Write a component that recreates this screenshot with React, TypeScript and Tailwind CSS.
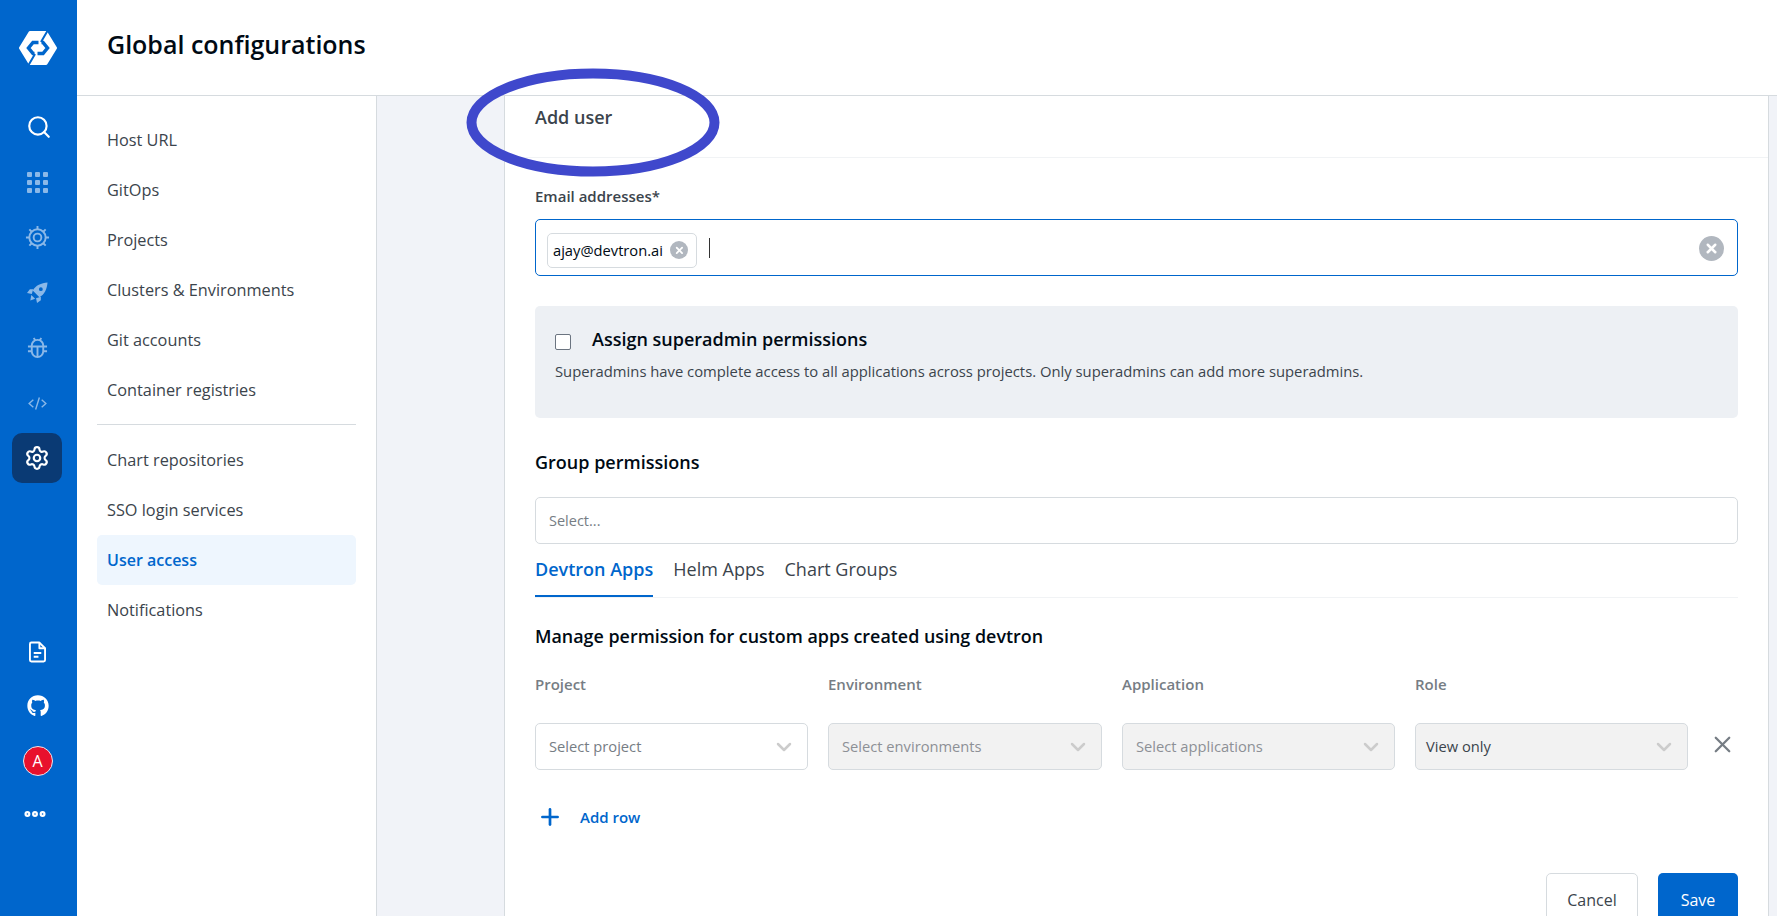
import { ChevronDown, Ellipsis, Plus, Search, Settings, X } from "lucide-react";
import { FaGithub } from "react-icons/fa";

const topItems = ["Host URL", "GitOps", "Projects", "Clusters & Environments", "Git accounts", "Container registries"];
const bottomItems = ["Chart repositories", "SSO login services", "User access", "Notifications"];

function Logo() {
  return (
    <svg width="38" height="34" viewBox="0 0 38 34">
      <polygon points="11,1.500 27,1.500 36.500,17 27,32.500 11,32.500 1.500,17" fill="white" stroke="white" strokeWidth="3" strokeLinejoin="round" />
      <path d="M29 -1L22 11M16 23L9 35" fill="none" stroke="#0066cc" strokeWidth="2" />
      <path d="M19.500 11.500H14L9.500 17L14 22.500H15.500M22.500 11.500H24L28.500 17L24 22.500H18.500" fill="none" stroke="#0066cc" strokeWidth="3.500" />
      <path d="M22 13.500L17.500 17H20.500L16 20.500" fill="none" stroke="white" strokeWidth="2" />
    </svg>
  );
}

function GridIcon() {
  return (
    <svg width="21" height="21" viewBox="0 0 21 21" fill="#8ab8e8">
      {[0, 8, 16].map((y) => [0, 8, 16].map((x) => <rect key={`${x}-${y}`} x={x} y={y} width="5" height="5" rx="1" />))}
    </svg>
  );
}

function HelmIcon() {
  return (
    <svg width="25" height="25" viewBox="0 0 26 26" fill="none" stroke="#8ab8e8" strokeWidth="2">
      <circle cx="13" cy="13" r="8.500" />
      <circle cx="13" cy="13" r="4" />
      <path d="M13 1v3.500M13 21.500V25M1 13h3.500M21.500 13H25M4.500 4.500l2.500 2.500M19 19l2.500 2.500M21.500 4.500L19 7M7 19l-2.500 2.500" />
    </svg>
  );
}

function RocketIcon() {
  return (
    <svg width="21" height="21" viewBox="0 0 22 22" fill="#8ab8e8">
      <path fillRule="evenodd" d="M21.500 .5C15 1 9 3.500 6 9L13 16C18.500 13 21 7 21.500 .5ZM14.500 5.500A2 2 0 1 0 14.500 9.500A2 2 0 1 0 14.500 5.500Z" />
      <path d="M6.500 7.500H3L0 11.500L5 12.500ZM14.500 15.500V19L10.500 22L9.500 17ZM4.500 13.500L8.500 17.500L3.500 19.500Z" />
    </svg>
  );
}

function BugIcon() {
  return (
    <svg width="21" height="21" viewBox="0 0 22 22" fill="none" stroke="#8ab8e8" strokeWidth="2">
      <path d="M5 9a6 6 0 0 1 12 0v6a6 6 0 0 1-12 0Z" />
      <path d="M1 10h20M11 10v11M1 15h4M17 15h4M7 1l2 3M15 1l-2 3" />
    </svg>
  );
}

function CodeIcon() {
  return (
    <svg width="19" height="13" viewBox="0 0 20 14" fill="none" stroke="#8ab8e8" strokeWidth="1.500">
      <path d="M5.500 3L1 7l4.500 4M14.500 3L19 7l-4.500 4M12 .5L8 13.500" />
    </svg>
  );
}

function DocIcon() {
  return (
    <svg width="17" height="22" viewBox="0 0 18 22" fill="none" stroke="white" strokeWidth="2" strokeLinejoin="round">
      <path d="M2.500 1H11L17 7V19.500A1.500 1.500 0 0 1 15.500 21H2.500A1.500 1.500 0 0 1 1 19.500V2.500A1.500 1.500 0 0 1 2.500 1Z" />
      <path d="M11 1V7H17M5 12H13M5 16H10" />
    </svg>
  );
}

function ClearButton({ className }: { className: string }) {
  return (
    <span className={`flex items-center justify-center rounded-full bg-[#b1b7bf] ${className}`}>
      <X className="h-3/5 w-3/5 text-white" strokeWidth={4} />
    </span>
  );
}

function SelectBox({ label, disabled, dark }: { label: string; disabled?: boolean; dark?: boolean }) {
  return (
    <div className={`flex h-[47px] flex-1 items-center justify-between rounded-[5px] border border-[#d6dbdf] pr-[11px] ${dark ? "pl-[10px]" : "pl-[13px]"} ${disabled ? "bg-[#f2f2f2]" : "bg-white"}`}>
      <span className={`text-[14.700px] ${dark ? "text-[#3b444c]" : disabled ? "text-[#8d9096]" : "text-[#767d84]"}`}>{label}</span>
      <ChevronDown className="h-[24px] w-[24px] text-[#cccccc]" strokeWidth={2.500} />
    </div>
  );
}

export default function App() {
  return (
    <div className="relative flex h-[916px] overflow-hidden bg-white font-['Open_Sans',sans-serif] text-[#3b444c]">
      {/* left rail */}
      <aside className="flex w-[77px] shrink-0 flex-col items-center bg-[#0066cc] pr-[2px] pt-[31px]">
        <Logo />
        <Search className="mt-[49px] ml-[2px] h-[26px] w-[26px] text-white" strokeWidth={2} />
        <div className="mt-[32px] h-[21px]"><GridIcon /></div>
        <div className="mt-[32px] h-[25px]"><HelmIcon /></div>
        <div className="mt-[32px] h-[21px]"><RocketIcon /></div>
        <div className="mt-[34px] h-[21px]"><BugIcon /></div>
        <div className="mt-[39px] h-[13px]"><CodeIcon /></div>
        <div className="mt-[23px] -ml-[2px] flex h-[50px] w-[50px] items-center justify-center rounded-[10px] bg-[#0a3a74]">
          <Settings className="h-[26px] w-[26px] text-white" strokeWidth={2} />
        </div>
        <div className="mt-auto flex flex-col items-center pb-[89px]">
          <div className="h-[22px]"><DocIcon /></div>
          <FaGithub className="mt-[32px] h-[22px] w-[22px] text-white" />
          <div className="mt-[29px] flex h-[30px] w-[30px] items-center justify-center rounded-full border border-[#e8e8f0] bg-[#e8112d] text-[16px] text-white">A</div>
          <Ellipsis className="mt-[25px] mr-[5px] h-[26px] w-[26px] text-white" strokeWidth={3.500} />
        </div>
      </aside>

      <div className="flex min-w-0 flex-1 flex-col">
        <header className="flex h-[96px] shrink-0 items-center border-b border-[#d6dbdf] pb-[6px] pl-[30px]">
          <h1 className="text-[25px] font-semibold text-[#000a14]">Global configurations</h1>
        </header>

        <div className="flex min-h-0 flex-1">
          {/* settings nav */}
          <nav className="w-[300px] shrink-0 border-r border-[#d6dbdf] px-[20px] pt-[19px] text-[16.300px]">
            {topItems.map((item) => (
              <div key={item} className="flex h-[50px] items-center px-[10px]">{item}</div>
            ))}
            <div className="mt-[9px] mb-[10px] border-t border-[#d6dbdf]" />
            {bottomItems.map((item) => (
              <div key={item} className={`flex h-[50px] items-center rounded-[5px] px-[10px] ${item === "User access" ? "bg-[#eef6fe] text-[16px] font-semibold text-[#0066cc]" : ""}`}>{item}</div>
            ))}
          </nav>

          <main className="min-w-0 flex-1 bg-[#f1f3f8] pl-[127px] pr-[8px]">
            <div className="h-full border-x border-[#d6dbdf] bg-white">
              <div className="flex h-[62px] border-b border-[#f1f3f5] pl-[30px] pt-[7px]">
                <h2 className="text-[18px] font-semibold leading-[28px]">Add user</h2>
              </div>

              <div className="px-[30px]">
                <label className="mt-[26px] block text-[15px] font-semibold leading-[24px]">Email addresses*</label>
                <div className="mt-[11px] flex h-[57px] items-center rounded-[5px] border border-[#0066cc] pl-[11px] pr-[13px]">
                  <div className="mt-[5px] flex h-[35px] items-center gap-[7px] rounded-[5px] border border-[#d6dbdf] pl-[5px] pr-[8px] text-[14.700px]">
                    <span className="text-[#000a14]">ajay@devtron.ai</span>
                    <ClearButton className="h-[18px] w-[18px]" />
                  </div>
                  <div className="ml-[12px] mt-[1px] h-[20px] w-px bg-[#333]" />
                  <ClearButton className="ml-auto mt-[2px] h-[25px] w-[25px]" />
                </div>

                <div className="mt-[30px] h-[112px] rounded-[5px] bg-[#edf0f4] pl-[20px] pt-[21px]">
                  <div className="flex items-center">
                    <span className="mt-[5px] h-[16px] w-[16px] rounded-[2px] border border-[#6b7480] bg-white" />
                    <span className="ml-[21px] text-[18px] font-semibold leading-[24px] text-[#000a14]">Assign superadmin permissions</span>
                  </div>
                  <p className="mt-[10px] text-[14.800px] leading-[20px]">Superadmins have complete access to all applications across projects. Only superadmins can add more superadmins.</p>
                </div>

                <h3 className="mt-[32px] text-[18px] font-semibold leading-[24px] text-[#000a14]">Group permissions</h3>

                <div className="mt-[23px] flex h-[47px] items-center rounded-[5px] border border-[#d6dbdf] pl-[13px] text-[14.500px] text-[#767d84]">Select...</div>

                <div className="mt-[8px] flex h-[46px] gap-[20px] border-b border-[#f1f3f5] text-[18px]">
                  <div className="border-b-2 border-[#0066cc] font-semibold leading-[34px] text-[#0066cc]">Devtron Apps</div>
                  <div className="leading-[34px]">Helm Apps</div>
                  <div className="leading-[34px]">Chart Groups</div>
                </div>

                <h3 className="mt-[25px] text-[17.900px] font-semibold leading-[26px] text-[#000a14]">Manage permission for custom apps created using devtron</h3>

                <div className="mt-[25px] grid grid-cols-[273px_274px_273px_273px_1fr] gap-x-[20px]">
                  {["Project", "Environment", "Application", "Role"].map((label) => (
                    <div key={label} className="text-[15px] font-semibold leading-[20px] text-[#767d84]">{label}</div>
                  ))}
                  <div />
                </div>

                <div className="mt-[29px] grid grid-cols-[273px_274px_273px_273px_1fr] items-center gap-x-[20px]">
                  <SelectBox label="Select project" />
                  <SelectBox label="Select environments" disabled />
                  <SelectBox label="Select applications" disabled />
                  <SelectBox label="View only" disabled dark />
                  <X className="-mt-[5px] ml-[1px] h-[27px] w-[27px] text-[#767d84]" strokeWidth={2} />
                </div>

                <div className="mt-[34px] flex items-center text-[15px] font-semibold text-[#0066cc]">
                  <Plus className="ml-[2px] h-[26px] w-[26px]" strokeWidth={2.500} />
                  <span className="ml-[17px]">Add row</span>
                </div>

                <div className="mt-[43px] flex justify-end gap-[20px] text-[16px] font-medium">
                  <button className="flex h-[54px] w-[92px] items-center justify-center rounded-[5px] border border-[#d6dbdf]">Cancel</button>
                  <button className="flex h-[54px] w-[80px] items-center justify-center rounded-[5px] bg-[#0066cc] text-white">Save</button>
                </div>
              </div>
            </div>
          </main>
        </div>
      </div>

      {/* hand-drawn highlight over the title */}
      <svg className="pointer-events-none absolute left-[464px] top-[65px]" width="258" height="115" viewBox="0 0 258 115" fill="none">
        <ellipse cx="129" cy="57.500" rx="121.500" ry="49" stroke="#3f48cc" strokeWidth="10" />
      </svg>
    </div>
  );
}
